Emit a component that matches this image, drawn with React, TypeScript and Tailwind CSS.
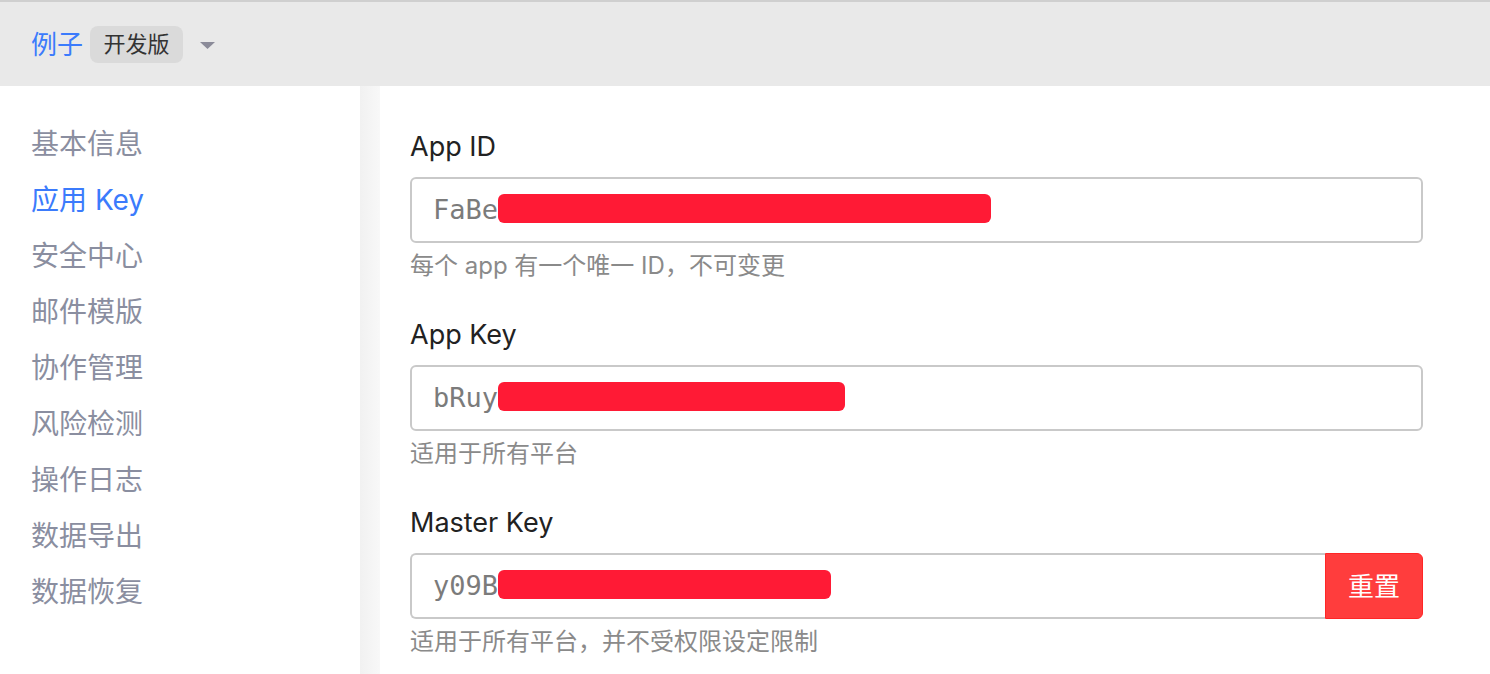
import React from "react";

const sans = { fontFamily: 'Inter, "Noto Sans CJK SC", sans-serif' };
const mono = { fontFamily: '"DejaVu Sans Mono", "Liberation Mono", monospace' };

const menu = ["基本信息", "应用 Key", "安全中心", "邮件模版", "协作管理", "风险检测", "操作日志", "数据导出", "数据恢复"];

function Field({
  label,
  prefix,
  bar,
  help,
  button,
}: {
  label: string;
  prefix: string;
  bar: number;
  help: string;
  button?: boolean;
}) {
  return (
    <div className="flex flex-col">
      <div className="h-[36px] leading-[36px] text-[27px] text-[#222]">{label}</div>
      <div className="mt-[12px] flex h-[66px]">
        <div
          className={`flex flex-1 items-center border-2 border-[#c9c9c9] bg-white pl-[21px] ${
            button ? "rounded-l-[6px] border-r-0" : "rounded-[6px]"
          }`}
        >
          <span className="text-[27px] text-[#7b7b7b]" style={mono}>
            {prefix}
          </span>
          <div className="-mt-[3px] h-[29px] rounded-[6px] bg-[#ff1a35]" style={{ width: bar }} />
        </div>
        {button && (
          <button className="w-[98px] rounded-r-[6px] border border-[#ff2626] bg-[#ff3d3d] text-[26px] text-white">
            重置
          </button>
        )}
      </div>
      <div className="mt-[6px] h-[34px] leading-[34px] text-[24px] text-[#8a8a8a]">{help}</div>
    </div>
  );
}

export default function App() {
  return (
    <div className="h-[674px] w-[1490px] overflow-hidden bg-white" style={sans}>
      <div className="flex h-[86px] items-center border-t-2 border-[#cfcfcf] bg-[#e9e9e9] pl-[31px]">
        <span className="text-[26px] text-[#3b7bfc]">例子</span>
        <span className="ml-[7px] flex h-[37px] w-[93px] items-center justify-center rounded-[8px] bg-[#dadada] text-[22px] text-[#333]">
          开发版
        </span>
        <svg className="ml-[17px] mt-[2px]" width="15" height="7" viewBox="0 0 15 7">
          <path d="M0 0 L15 0 L7.5 7 Z" fill="#8b8b99" />
        </svg>
      </div>
      <div className="flex h-[588px]">
        <div className="w-[360px] pt-[30px] pl-[31px]">
          {menu.map((m, i) => (
            <div
              key={m}
              className={`h-[56px] leading-[56px] text-[28px] ${i === 1 ? "text-[#3b7bfc]" : "text-[#8a8ea0]"}`}
            >
              {m}
            </div>
          ))}
        </div>
        <div className="w-[20px] bg-gradient-to-r from-[#f1f1f1] to-[#f8f8f8]" />
        <div className="flex flex-1 flex-col gap-[34px] pt-[43px] pl-[30px] pr-[67px]">
          <Field label="App ID" prefix="FaBe" bar={493} help="每个 app 有一个唯一 ID，不可变更" />
          <Field label="App Key" prefix="bRuy" bar={347} help="适用于所有平台" />
          <Field label="Master Key" prefix="y09B" bar={333} help="适用于所有平台，并不受权限设定限制" button />
        </div>
      </div>
    </div>
  );
}
